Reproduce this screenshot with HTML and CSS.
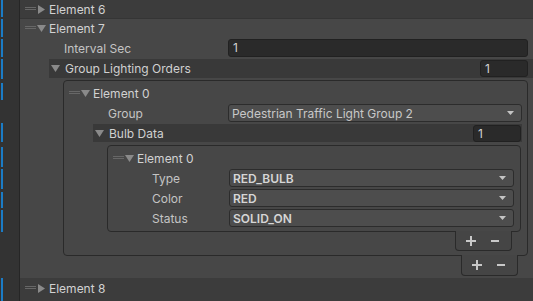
FILE: index.html
```html
<!DOCTYPE html>
<html lang="en">
<head>
    <meta charset="UTF-8">
    <title>Inspector - Group Lighting Orders</title>
    <link rel="stylesheet" href="styles.css">
</head>
<body>
<div class="inspector">
    <div class="gutter"><div class="override-marks"></div></div>
    <div class="list">
        <div class="item-closed">
            <span class="handle"></span>
            <svg class="arrow" width="9" height="9" viewBox="0 0 9 9"><polygon points="1,0 8,4.5 1,9"/></svg>
            <span class="name">Element 6</span>
        </div>

        <div class="item-open">
            <div class="item-head">
                <span class="handle"></span>
                <svg class="arrow" width="9" height="9" viewBox="0 0 9 9"><polygon points="0,1 9,1 4.5,8"/></svg>
                <span class="name">Element 7</span>
            </div>
            <div class="prop prop-l0">
                <span class="label">Interval Sec</span>
                <div class="field">1</div>
            </div>
            <div class="fold">
                <svg class="arrow" width="9" height="9" viewBox="0 0 9 9"><polygon points="0,1 9,1 4.5,8"/></svg>
                <span class="fold-name">Group Lighting Orders</span>
                <div class="field field-size">1</div>
            </div>

            <div class="box">
                <div class="item-head">
                    <span class="handle"></span>
                    <svg class="arrow" width="9" height="9" viewBox="0 0 9 9"><polygon points="0,1 9,1 4.5,8"/></svg>
                    <span class="name">Element 0</span>
                </div>
                <div class="prop prop-l1">
                    <span class="label">Group</span>
                    <div class="popup">
                        <span>Pedestrian Traffic Light Group 2</span>
                        <svg width="7" height="4" viewBox="0 0 7 4"><polygon points="0,0 7,0 3.5,4"/></svg>
                    </div>
                </div>
                <div class="fold">
                    <svg class="arrow" width="9" height="9" viewBox="0 0 9 9"><polygon points="0,1 9,1 4.5,8"/></svg>
                    <span class="fold-name">Bulb Data</span>
                    <div class="field field-size">1</div>
                </div>

                <div class="box box-inner">
                    <div class="item-head">
                        <span class="handle"></span>
                        <svg class="arrow" width="9" height="9" viewBox="0 0 9 9"><polygon points="0,1 9,1 4.5,8"/></svg>
                        <span class="name">Element 0</span>
                    </div>
                    <div class="prop prop-l2">
                        <span class="label">Type</span>
                        <div class="popup popup-bold">
                            <span>RED_BULB</span>
                            <svg width="7" height="4" viewBox="0 0 7 4"><polygon points="0,0 7,0 3.5,4"/></svg>
                        </div>
                    </div>
                    <div class="prop prop-l2">
                        <span class="label">Color</span>
                        <div class="popup popup-bold">
                            <span>RED</span>
                            <svg width="7" height="4" viewBox="0 0 7 4"><polygon points="0,0 7,0 3.5,4"/></svg>
                        </div>
                    </div>
                    <div class="prop prop-l2">
                        <span class="label">Status</span>
                        <div class="popup popup-bold">
                            <span>SOLID_ON</span>
                            <svg width="7" height="4" viewBox="0 0 7 4"><polygon points="0,0 7,0 3.5,4"/></svg>
                        </div>
                    </div>
                </div>
                <div class="footer footer-inner">
                    <svg width="10" height="10" viewBox="0 0 10 10"><path d="M0 4h10v2H0zM4 0h2v10H4z"/></svg>
                    <svg width="8" height="10" viewBox="0 0 8 10"><path d="M0 4h8v2H0z"/></svg>
                </div>
            </div>
            <div class="footer footer-outer">
                <svg width="10" height="10" viewBox="0 0 10 10"><path d="M0 4h10v2H0zM4 0h2v10H4z"/></svg>
                <svg width="8" height="10" viewBox="0 0 8 10"><path d="M0 4h8v2H0z"/></svg>
            </div>
        </div>

        <div class="item-closed item-last">
            <span class="handle"></span>
            <svg class="arrow" width="9" height="9" viewBox="0 0 9 9"><polygon points="1,0 8,4.5 1,9"/></svg>
            <span class="name">Element 8</span>
        </div>
    </div>
</div>
</body>
</html>
```

FILE: styles.css
```css
/* Unity-like dark inspector */
body {
    margin: 0;
    background-color: #383838;
    font-family: Inter, "Noto Sans", sans-serif;
    font-size: 12px;
    color: #c4c4c4;
}
.inspector {
    display: flex;
    height: 301px;
    overflow: hidden;
}
.gutter {
    display: flex;
    width: 19px;
    flex: none;
    background-color: #333333;
    border-right: 1px solid #262626;
}
/* blue prefab override bars */
.override-marks {
    width: 2px;
    margin-left: 1px;
    background-image: linear-gradient(to bottom,
        #1b7cc6 0px, #1b7cc6 17px, transparent 17px, transparent 19px,
        #1b7cc6 19px, #1b7cc6 37px, transparent 37px, transparent 39px,
        #1b7cc6 39px, #1b7cc6 57px, transparent 57px, transparent 59px,
        #1b7cc6 59px, #1b7cc6 79px, transparent 79px, transparent 83px,
        #1b7cc6 83px, #1b7cc6 100px, transparent 100px, transparent 123px,
        #1b7cc6 123px, #1b7cc6 142px, transparent 142px, transparent 147px,
        #1b7cc6 147px, #1b7cc6 167px, transparent 167px, transparent 169px,
        #1b7cc6 169px, #1b7cc6 189px, transparent 189px, transparent 192px,
        #1b7cc6 192px, #1b7cc6 208px, transparent 208px, transparent 210px,
        #1b7cc6 210px, #1b7cc6 232px, transparent 232px, transparent 278px,
        #1b7cc6 278px, #1b7cc6 301px);
}
.list {
    flex: 1;
    min-width: 0;
}
.item-closed {
    display: flex;
    align-items: center;
    height: 18px;
    padding-left: 5px;
    background-color: #3c3c3c;
    border-bottom: 1px solid #353535;
}
.item-last {
    height: 23px;
    padding-top: 0;
    border-bottom: none;
    align-items: flex-start;
}
.item-last .handle, .item-last .arrow, .item-last .name {
    margin-top: 6px;
}
.item-last .handle {
    margin-top: 8px;
}
.item-last .name {
    margin-top: 2px;
    line-height: 18px;
}
.item-open {
    background-color: #474747;
    padding-bottom: 2px;
}
.item-head {
    display: flex;
    align-items: center;
    height: 18px;
    padding-left: 5px;
}
.handle {
    width: 11px;
    height: 1px;
    flex: none;
    border-top: 1px solid #676767;
    border-bottom: 1px solid #676767;
    margin-bottom: 1px;
}
.arrow {
    flex: none;
    margin-left: 1px;
    fill: #8a8a8a;
}
.name {
    margin-left: 3px;
    color: #d2d2d2;
}
.prop {
    display: flex;
    align-items: center;
    height: 18px;
    margin-top: 2px;
    margin-right: 5px;
    padding-left: 44px;
}
.label {
    flex: none;
}
.prop-l0 .label { width: 164px; }
.prop-l1 .label { width: 120px; }
.prop-l2 .label { width: 77px; }
.field {
    flex: 1;
    box-sizing: border-box;
    height: 18px;
    line-height: 16px;
    padding-left: 4px;
    background-color: #2a2a2a;
    border: 1px solid #212121;
    border-radius: 3px;
    color: #d2d2d2;
}
.field-size {
    flex: none;
    width: 48px;
    height: 17px;
    line-height: 15px;
    margin-left: auto;
}
.popup {
    flex: 1;
    display: flex;
    align-items: center;
    justify-content: space-between;
    box-sizing: border-box;
    height: 18px;
    padding: 0 7px 0 3px;
    background-color: #4d4d4d;
    border: 1px solid #2c2c2c;
    border-radius: 3px;
    color: #c8c8c8;
}
.popup svg {
    fill: #c4c4c4;
    flex: none;
}
.popup-bold {
    font-weight: 600;
    color: #d6d6d6;
}
.fold {
    display: flex;
    align-items: center;
    height: 19px;
    margin-top: 2px;
    margin-left: 29px;
    padding-left: 2px;
    padding-right: 5px;
    background-color: #393939;
}
.fold .arrow {
    margin-left: 0;
}
.fold-name {
    margin-left: 5px;
    color: #d0d0d0;
}
.box {
    margin-top: 2px;
    margin-left: 43px;
    margin-right: 5px;
    padding-top: 3px;
    padding-bottom: 4px;
    border: 1px solid #2a2a2a;
    border-radius: 4px;
    background-color: #474747;
}
.box .fold {
    height: 18px;
    margin-right: 5px;
    padding-left: 2px;
    padding-right: 1px;
}
.box .prop {
    margin-right: 5px;
}
.box-inner {
    margin-top: 3px;
    margin-right: 6px;
    padding-bottom: 4px;
}
.box-inner .prop {
    margin-right: 6px;
}
.footer {
    display: flex;
    align-items: center;
    justify-content: space-between;
    box-sizing: border-box;
    width: 57px;
    margin-left: auto;
    margin-top: -1px;
    padding: 0 12px 0 10px;
    background-color: #454545;
    border: 1px solid #2a2a2a;
    border-top: none;
    border-radius: 0 0 4px 4px;
    position: relative;
}
.footer svg {
    fill: #c8c8c8;
}
.footer-inner {
    height: 20px;
    margin-right: 15px;
}
.footer-outer {
    height: 21px;
    margin-right: 15px;
}
```
